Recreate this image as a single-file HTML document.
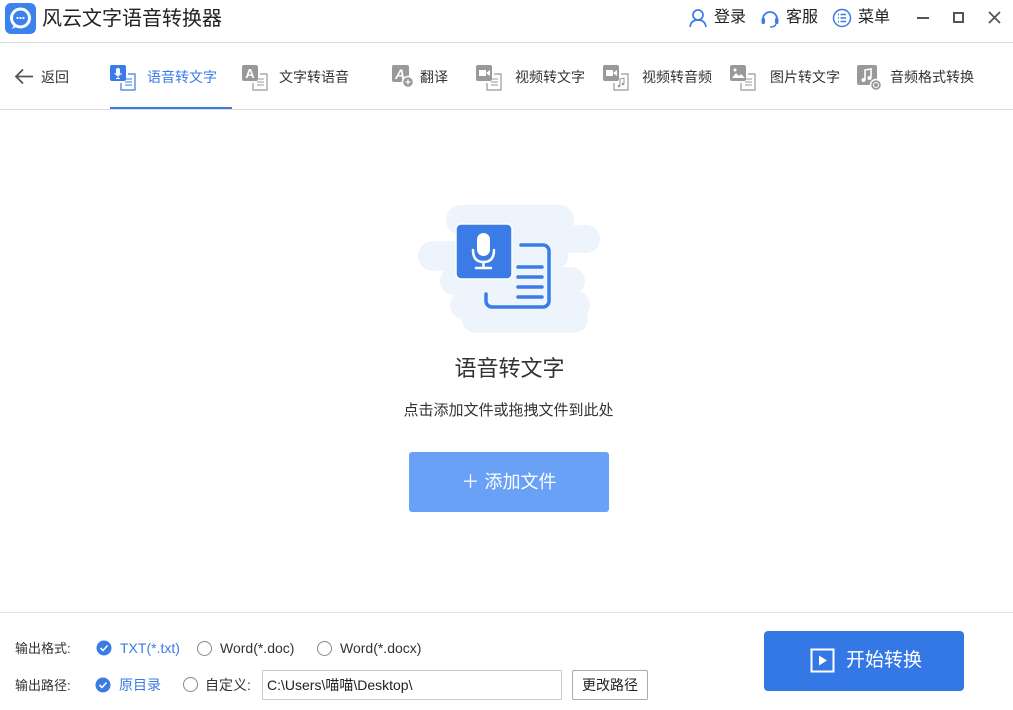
<!DOCTYPE html>
<html><head><meta charset="utf-8"><style>
*{margin:0;padding:0;box-sizing:border-box}
body{width:1013px;height:710px;background:#fff;position:relative;overflow:hidden;font-family:"Liberation Sans","Noto Sans CJK SC",sans-serif;color:#333}
.a{position:absolute;white-space:nowrap}
.nav{font-size:14px;color:#333;top:68px;line-height:18px}
.hl{position:absolute;left:0;width:1013px;height:1px;background:#dcdcdc}
.ic{position:absolute}
</style></head><body>
<svg class="ic" style="left:5px;top:3px" width="31" height="31" viewBox="0 0 31 31"><rect width="31" height="31" rx="6" fill="#3a82ee"/><circle cx="15.5" cy="15" r="9" fill="none" stroke="#fff" stroke-width="3"/><path d="M9 22 L7 26 L12 23.5" fill="#fff"/><circle cx="12.5" cy="15" r="1.1" fill="#fff"/><circle cx="15.5" cy="15" r="1.1" fill="#fff"/><circle cx="18.5" cy="15" r="1.1" fill="#fff"/></svg>
<div class="a" style="left:42px;top:5px;font-size:20px;line-height:28px;color:#222">风云文字语音转换器</div>
<svg class="ic" style="left:688px;top:8px" width="20" height="20" viewBox="0 0 20 20"><circle cx="10" cy="7" r="5" fill="none" stroke="#3a7be6" stroke-width="1.7"/><path d="M2 19 Q3 12 10 12 Q17 12 18 19" fill="none" stroke="#3a7be6" stroke-width="1.7"/></svg>
<div class="a" style="left:714px;top:8px;font-size:16px;line-height:20px;color:#222">登录</div>
<svg class="ic" style="left:760px;top:8px" width="20" height="20" viewBox="0 0 20 20"><path d="M3 11 A7 7 0 0 1 17 11" fill="none" stroke="#3a7be6" stroke-width="1.8"/><rect x="1.5" y="10" width="3.5" height="6" rx="1.5" fill="#3a7be6"/><rect x="15" y="10" width="3.5" height="6" rx="1.5" fill="#3a7be6"/><path d="M16 16 Q15 19 10 19" fill="none" stroke="#3a7be6" stroke-width="1.4"/></svg>
<div class="a" style="left:786px;top:8px;font-size:16px;line-height:20px;color:#222">客服</div>
<svg class="ic" style="left:832px;top:8px" width="20" height="20" viewBox="0 0 20 20"><circle cx="10" cy="10" r="8.5" fill="none" stroke="#3a7be6" stroke-width="1.5"/><path d="M6 6.5h1M8.5 6.5h5.5M6 10h1M8.5 10h5.5M6 13.5h1M8.5 13.5h5.5" stroke="#3a7be6" stroke-width="1.5"/></svg>
<div class="a" style="left:858px;top:8px;font-size:16px;line-height:20px;color:#222">菜单</div>
<div class="a" style="left:917px;top:17px;width:12px;height:2px;background:#555"></div>
<div class="a" style="left:953px;top:12px;width:11px;height:11px;border:2px solid #555"></div>
<svg class="ic" style="left:988px;top:11px" width="13" height="13"><path d="M1 1L12 12M12 1L1 12" stroke="#555" stroke-width="1.8"/></svg>
<div class="hl" style="top:42px"></div>
<svg class="ic" style="left:14px;top:68px" width="20" height="17"><path d="M19 8.5H2M9 1.5L2 8.5L9 15.5" fill="none" stroke="#555" stroke-width="1.8"/></svg>
<div class="a nav" style="left:41px">返回</div>
<svg class="ic" style="left:110px;top:65px" width="26" height="26"><rect x="0" y="0" width="16" height="16" rx="2" fill="#3a7be6"/><rect x="6" y="3" width="4" height="7" rx="2" fill="#fff"/><path d="M4.5 8 Q8 13 11.5 8M8 11v2.5M6 13.5h4" stroke="#fff" stroke-width="1" fill="none"/><path d="M18 9h7v16H11v-7" fill="none" stroke="#3a7be6" stroke-width="1.2"/><path d="M15 14h7M15 17h7M15 20h7" stroke="#3a7be6"/></svg>
<div class="a nav" style="left:147px;color:#3a7be6">语音转文字</div>
<div class="a" style="left:110px;top:107px;width:122px;height:3px;background:#3a7be6"></div>
<svg class="ic" style="left:242px;top:65px" width="26" height="26"><rect x="0" y="0" width="16" height="16" rx="2" fill="#999"/><text x="8" y="13" font-size="13" font-weight="bold" fill="#fff" text-anchor="middle" font-family="Liberation Sans">A</text><path d="M18 9h7v16H11v-7" fill="none" stroke="#999" stroke-width="1.2"/><path d="M15 14h7M15 17h7M15 20h7" stroke="#999"/></svg>
<div class="a nav" style="left:279px">文字转语音</div>
<svg class="ic" style="left:392px;top:65px" width="24" height="24"><rect x="0" y="0" width="17" height="17" rx="2" fill="#999"/><text x="8" y="14" font-size="14" font-weight="bold" font-style="italic" fill="#fff" text-anchor="middle" font-family="Liberation Sans">A</text><circle cx="16" cy="17" r="5.5" fill="#999" stroke="#fff" stroke-width="1.5"/><path d="M13.5 17h5M16 14.5v5" stroke="#fff" stroke-width="1.2"/></svg>
<div class="a nav" style="left:420px">翻译</div>
<svg class="ic" style="left:476px;top:65px" width="26" height="26"><rect x="0" y="0" width="16" height="16" rx="2" fill="#999"/><rect x="3" y="5" width="7" height="6" fill="#fff"/><path d="M10 8l4-3v6z" fill="#fff"/><path d="M18 9h7v16H11v-7" fill="none" stroke="#999" stroke-width="1.2"/><path d="M15 14h7M15 17h7M15 20h7" stroke="#999"/></svg>
<div class="a nav" style="left:515px">视频转文字</div>
<svg class="ic" style="left:603px;top:65px" width="26" height="26"><rect x="0" y="0" width="16" height="16" rx="2" fill="#999"/><rect x="3" y="5" width="7" height="6" fill="#fff"/><path d="M10 8l4-3v6z" fill="#fff"/><path d="M18 9h7v16H11v-7" fill="none" stroke="#999" stroke-width="1.2"/><path d="M17 21V14l4-1v6" fill="none" stroke="#999"/><circle cx="16" cy="21" r="1.3" fill="#999"/><circle cx="20" cy="19" r="1.3" fill="#999"/></svg>
<div class="a nav" style="left:642px">视频转音频</div>
<svg class="ic" style="left:730px;top:65px" width="26" height="26"><rect x="0" y="0" width="16" height="16" rx="2" fill="#999"/><path d="M2 13l4-5 3 3 2-2 4 4z" fill="#fff"/><circle cx="5" cy="5" r="1.5" fill="#fff"/><path d="M18 9h7v16H11v-7" fill="none" stroke="#999" stroke-width="1.2"/><path d="M15 14h7M15 17h7M15 20h7" stroke="#999"/></svg>
<div class="a nav" style="left:770px">图片转文字</div>
<svg class="ic" style="left:857px;top:65px" width="26" height="26"><rect x="0" y="0" width="20" height="20" rx="2" fill="#999"/><path d="M8 15V5l6-1v9" fill="none" stroke="#fff" stroke-width="1.6"/><circle cx="6.5" cy="15" r="2" fill="#fff"/><circle cx="12.5" cy="13" r="2" fill="#fff"/><circle cx="19" cy="20" r="5.5" fill="#999" stroke="#fff" stroke-width="1.5"/><circle cx="19" cy="20" r="2.5" fill="none" stroke="#fff" stroke-width="1"/></svg>
<div class="a nav" style="left:890px">音频格式转换</div>
<div class="hl" style="top:109px"></div>
<svg class="ic" style="left:410px;top:195px" width="200" height="145" viewBox="0 0 200 145">
<g fill="#eef4fc"><rect x="36" y="10" width="128" height="30" rx="15"/><rect x="60" y="30" width="130" height="28" rx="14"/><rect x="8" y="46" width="150" height="30" rx="15"/><rect x="30" y="72" width="145" height="28" rx="14"/><rect x="40" y="96" width="140" height="28" rx="14"/><rect x="52" y="110" width="126" height="28" rx="14"/></g>
<path d="M111 50h22a6 6 0 0 1 6 6v50a6 6 0 0 1-6 6h-51a6 6 0 0 1-6-6v-7" fill="none" stroke="#3a7be6" stroke-width="3.5" stroke-linecap="round"/>
<path d="M108 72h24M108 82h24M108 92h24M108 102h24" stroke="#3a7be6" stroke-width="3.5" stroke-linecap="round"/>
<rect x="46" y="29" width="56" height="55" rx="5" fill="#3a7be6" stroke="#fff" stroke-width="1.5"/>
<rect x="67" y="38" width="13" height="23" rx="6.5" fill="#fff"/>
<path d="M63 55 Q63 67 73.5 67 Q84 67 84 55M73.5 67v6M66 73h15" fill="none" stroke="#fff" stroke-width="2.5" stroke-linecap="round"/>
</svg>
<div class="a" style="left:0;width:1019px;text-align:center;top:355px;font-size:22px;line-height:28px;color:#333">语音转文字</div>
<div class="a" style="left:0;width:1017px;text-align:center;top:402px;font-size:15px;line-height:18px;color:#333">点击添加文件或拖拽文件到此处</div>
<div class="a" style="left:409px;top:452px;width:200px;height:60px;background:#69a1f6;border-radius:3px;color:#fff;font-size:18px;line-height:60px;text-align:center">＋ 添加文件</div>
<div class="hl" style="top:612px;background:#e6e6e6"></div>
<div class="a" style="left:15px;top:640px;font-size:13px;line-height:17px">输出格式:</div>
<svg class="ic" style="left:96px;top:640px" width="16" height="16"><circle cx="8" cy="8" r="7.5" fill="#3a7be6"/><path d="M4.5 8l2.5 2.5 4.5-5" fill="none" stroke="#fff" stroke-width="1.6"/></svg>
<div class="a" style="left:120px;top:639px;font-size:14px;line-height:18px;color:#3a7be6">TXT(*.txt)</div>
<div class="a" style="left:197px;top:641px;width:15px;height:15px;border:1px solid #888;border-radius:50%"></div>
<div class="a" style="left:220px;top:639px;font-size:14px;line-height:18px">Word(*.doc)</div>
<div class="a" style="left:317px;top:641px;width:15px;height:15px;border:1px solid #888;border-radius:50%"></div>
<div class="a" style="left:340px;top:639px;font-size:14px;line-height:18px">Word(*.docx)</div>
<div class="a" style="left:15px;top:677px;font-size:13px;line-height:17px">输出路径:</div>
<svg class="ic" style="left:95px;top:677px" width="16" height="16"><circle cx="8" cy="8" r="7.5" fill="#3a7be6"/><path d="M4.5 8l2.5 2.5 4.5-5" fill="none" stroke="#fff" stroke-width="1.6"/></svg>
<div class="a" style="left:119px;top:676px;font-size:14px;line-height:18px;color:#3a7be6">原目录</div>
<div class="a" style="left:183px;top:677px;width:15px;height:15px;border:1px solid #888;border-radius:50%"></div>
<div class="a" style="left:205px;top:676px;font-size:14px;line-height:18px">自定义:</div>
<div class="a" style="left:262px;top:670px;width:300px;height:30px;border:1px solid #ccc;font-size:14px;line-height:28px;padding-left:4px;color:#222">C:\Users\喵喵\Desktop\</div>
<div class="a" style="left:572px;top:670px;width:76px;height:30px;border:1px solid #aaa;border-radius:2px;font-size:14px;line-height:28px;text-align:center;color:#222">更改路径</div>
<div class="a" style="left:764px;top:631px;width:200px;height:60px;background:#3478e6;border-radius:4px"></div>
<svg class="ic" style="left:810px;top:648px" width="25" height="25"><rect x="1.5" y="1.5" width="22" height="22" fill="none" stroke="#fff" stroke-width="2"/><path d="M9 7.5v10l8-5z" fill="#fff"/></svg>
<div class="a" style="left:846px;top:649px;font-size:19px;line-height:24px;color:#fff">开始转换</div>
</body></html>
